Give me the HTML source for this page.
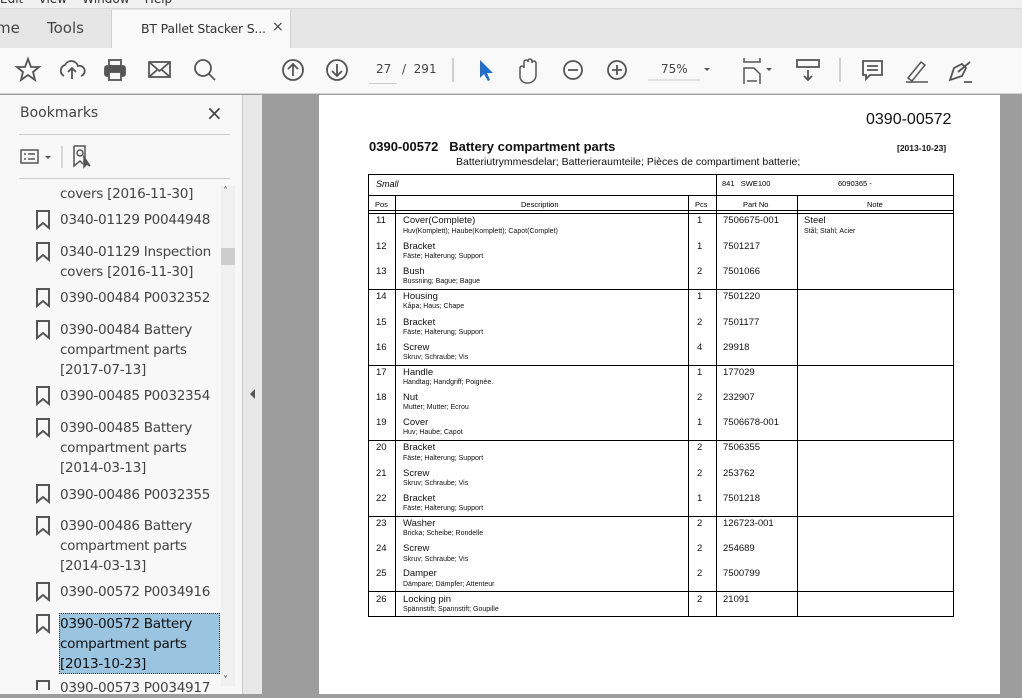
<!DOCTYPE html>
<html><head><meta charset="utf-8"><style>
*{margin:0;padding:0;box-sizing:border-box}
body{width:1022px;height:694px;overflow:hidden;position:relative;font-family:"Liberation Sans",sans-serif;background:#9d9d9d}
.a{position:absolute;white-space:nowrap}
.ui{font-family:"DejaVu Sans","Liberation Sans",sans-serif}
.hl{position:absolute;height:1px;background:#000}
.vl{position:absolute;width:1px;background:#000}
.n{position:absolute;font-size:9.5px;color:#111}
.s{position:absolute;font-size:7px;color:#111}
.bt{position:absolute;left:60px;font-size:13.6px;color:#444;line-height:20px;font-family:"DejaVu Sans",sans-serif;letter-spacing:-0.3px}
</style></head><body>
<!-- menu -->
<div class="a" style="left:0;top:0;width:1022px;height:8px;background:#f0f0f0"></div>
<div class="a ui" style="left:0;top:-8px;font-size:12px;color:#333">Edit &nbsp;&nbsp; View &nbsp;&nbsp; Window &nbsp;&nbsp; Help</div>
<!-- tabs -->
<div class="a" style="left:0;top:8px;width:1022px;height:40px;background:#e6e6e6;border-top:1px solid #d8d8d8"></div>
<div class="a ui" style="left:-4px;top:19px;font-size:15px;color:#444">me</div>
<div class="a ui" style="left:47px;top:19px;font-size:15px;color:#444">Tools</div>
<div class="a" style="left:111px;top:10px;width:180px;height:40px;background:#f9f9f9;border-left:1px solid #d0d0d0;border-right:1px solid #d0d0d0"></div>
<div class="a ui" style="left:141px;top:21px;font-size:12.5px;color:#333;letter-spacing:-0.2px">BT Pallet Stacker S...</div>
<div class="a ui" style="left:272px;top:19px;font-size:14px;color:#444">×</div>
<!-- toolbar -->
<div class="a" style="left:0;top:48px;width:1022px;height:46px;background:#f9f9f9;border-bottom:1px solid #d4d4d4"></div>
<svg class="a" style="left:0;top:48px" width="1022" height="46" fill="none" stroke="#555" stroke-width="1.8">
<polygon points="28,11 31,19 39,19 33,24 35,32 28,27 21,32 23,24 17,19 25,19"/>
<path d="M64,28 a6,6 0 0 1 1,-11 a7,7 0 0 1 13,1 a5,5 0 0 1 3,10 M72,31 v-11 M68,24 l4,-4 l4,4"/>
<rect x="105" y="18" width="20" height="10" rx="2" fill="#555"/><rect x="109" y="12" width="12" height="6"/><rect x="109" y="24" width="12" height="8" fill="#f9f9f9"/>
<rect x="149" y="14" width="21" height="15"/><path d="M149,14 l10.5,9 l10.5,-9 M149,29 l8,-7 M170,29 l-8,-7"/>
<circle cx="203" cy="20" r="8"/><path d="M209,26 l6,6"/>
<circle cx="293" cy="22" r="10"/><path d="M293,28 v-12 M288,21 l5,-5 l5,5"/>
<circle cx="337" cy="22" r="10"/><path d="M337,16 v12 M332,23 l5,5 l5,-5"/>
<path d="M453,10 v24" stroke="#ccc"/>
<path d="M480,12 v18 l4,-4 l4,7 l2,-1 l-3,-7 h6 z" fill="#1f6fd1" stroke="none"/>
<path d="M520,30 v-10 a2,2 0 0 1 4,0 v-6 a2,2 0 0 1 4,0 v-1 a2,2 0 0 1 4,0 v2 a2,2 0 0 1 4,0 v12 a8,8 0 0 1 -8,8 h-2 a8,8 0 0 1 -6,-5" stroke-width="1.5"/>
<circle cx="573" cy="22" r="9"/><path d="M568,22 h10"/>
<circle cx="617" cy="22" r="9"/><path d="M612,22 h10 M617,17 v10"/>
<path d="M648,32 h52" stroke="#ccc" stroke-width="1"/>
<path d="M704,20 l3,3 l3,-3" fill="#555" stroke="none"/>
<path d="M744,10 v4 h16 v-4 M744,36 v-16 h10 l6,6 v10 M747,33 h10" stroke-width="1.5"/>
<path d="M766,20 l3,3 l3,-3" fill="#555" stroke="none"/>
<rect x="797" y="12" width="22" height="7"/><path d="M808,22 v10 M804,28 l4,4 l4,-4"/>
<path d="M840,10 v24" stroke="#ccc"/>
<path d="M863,13 h19 v14 h-12 l-4,4 v-4 h-3 z M867,18 h11 M867,22 h11"/>
<path d="M908,30 l13,-16 l4,3 l-13,16 z M906,34 h22" stroke-width="1.5"/>
<path d="M950,32 l4,-12 l8,-4 l4,4 l-4,8 z M958,24 l12,-10 M964,34 h8"/>
</svg>
<div class="a ui" style="left:376px;top:62px;font-size:12px;color:#444">27</div>
<div class="a" style="left:369px;top:83px;width:28px;height:1px;background:#ccc"></div>
<div class="a ui" style="left:402px;top:62px;font-size:12px;color:#444">/&nbsp; 291</div>
<div class="a ui" style="left:661px;top:62px;font-size:12px;color:#444">75%</div>
<!-- sidebar -->
<div class="a" style="left:0;top:95px;width:243px;height:599px;background:#f8f8f8;border-right:1px solid #ccc"></div>
<div class="a" style="left:243px;top:95px;width:19px;height:599px;background:#e8e8e8"></div>
<div class="a" style="left:250px;top:389px;border:5px solid transparent;border-right:5px solid #555;border-left:0"></div>
<div class="a ui" style="left:20px;top:105px;font-size:14px;color:#444">Bookmarks</div>
<div class="a ui" style="left:206px;top:101px;font-size:20px;color:#444">×</div>
<div class="a" style="left:19px;top:134px;width:211px;height:1px;background:#ccc"></div>
<svg class="a" style="left:18px;top:143px" width="80" height="30" fill="none" stroke="#555" stroke-width="1.5">
<rect x="3" y="7" width="17" height="13"/><path d="M6,11 h2 M10,11 h7 M6,16 h2 M10,16 h7"/><path d="M27,13 l3,3 l3,-3" fill="#555" stroke="none"/>
<path d="M44,3 v22" stroke="#ccc"/><path d="M56,3 h11 v12 M56,3 v20 l6,-5 l3,3"/><circle cx="62" cy="10" r="3"/><path d="M66,14 l0,10 l3,-3 l3,2 z" fill="#555"/>
</svg>
<div class="a" style="left:19px;top:178px;width:211px;height:1px;background:#ccc"></div>
<div class="a" style="left:221px;top:186px;width:14px;height:500px;background:#f0f0f0"></div>
<div class="a" style="left:221px;top:248px;width:14px;height:17px;background:#cdcdcd"></div>
<div class="a ui" style="left:223px;top:186px;font-size:10px;color:#555">˄</div>
<div class="a ui" style="left:223px;top:675px;font-size:10px;color:#555">˅</div>
<div class="a" style="left:59px;top:613px;width:161px;height:61px;background:#9ac4e0;border:1px dotted #333"></div>
<div class="bt" style="top:184px">covers [2016-11-30]</div>
<div class="bt" style="top:210px">0340-01129 P0044948</div>
<div class="bt" style="top:242px">0340-01129 Inspection<br>covers [2016-11-30]</div>
<div class="bt" style="top:288px">0390-00484 P0032352</div>
<div class="bt" style="top:320px">0390-00484 Battery<br>compartment parts<br>[2017-07-13]</div>
<div class="bt" style="top:386px">0390-00485 P0032354</div>
<div class="bt" style="top:418px">0390-00485 Battery<br>compartment parts<br>[2014-03-13]</div>
<div class="bt" style="top:485px">0390-00486 P0032355</div>
<div class="bt" style="top:516px">0390-00486 Battery<br>compartment parts<br>[2014-03-13]</div>
<div class="bt" style="top:582px">0390-00572 P0034916</div>
<div class="bt" style="top:614px;color:#111">0390-00572 Battery<br>compartment parts<br>[2013-10-23]</div>
<div class="bt" style="top:678px">0390-00573 P0034917</div>
<svg class="a" style="left:34px;top:210px" width="20" height="480" fill="none" stroke="#555" stroke-width="2">
<path d="M3,1 h12 v17 l-6,-5 l-6,5 z"/><path transform="translate(0,32)" d="M3,1 h12 v17 l-6,-5 l-6,5 z"/>
<path transform="translate(0,78)" d="M3,1 h12 v17 l-6,-5 l-6,5 z"/><path transform="translate(0,110)" d="M3,1 h12 v17 l-6,-5 l-6,5 z"/>
<path transform="translate(0,176)" d="M3,1 h12 v17 l-6,-5 l-6,5 z"/><path transform="translate(0,208)" d="M3,1 h12 v17 l-6,-5 l-6,5 z"/>
<path transform="translate(0,274)" d="M3,1 h12 v17 l-6,-5 l-6,5 z"/><path transform="translate(0,306)" d="M3,1 h12 v17 l-6,-5 l-6,5 z"/>
<path transform="translate(0,372)" d="M3,1 h12 v17 l-6,-5 l-6,5 z"/><path transform="translate(0,404)" d="M3,1 h12 v17 l-6,-5 l-6,5 z"/>
<path transform="translate(0,470)" d="M3,1 h12 v17 l-6,-5 l-6,5 z"/>
</svg>
<!-- page -->
<div class="a" style="left:319px;top:95px;width:681px;height:599px;background:#fff"></div>
<div class="a" style="left:866px;top:111px;font-size:16px;color:#111">0390-00572</div>
<div class="a" style="left:369px;top:139px;font-size:13px;font-weight:bold;color:#111">0390-00572 &nbsp;&nbsp;Battery compartment parts</div>
<div class="a" style="left:897px;top:143px;font-size:8.5px;font-weight:bold;color:#111">[2013-10-23]</div>
<div class="a" style="left:456px;top:156px;font-size:10.5px;color:#111">Batteriutrymmesdelar; Batterieraumteile; Pièces de compartiment batterie;</div>
<!-- table lines -->
<div class="hl" style="left:368px;top:174px;width:586px"></div>
<div class="hl" style="left:368px;top:195px;width:586px"></div>
<div class="hl" style="left:368px;top:210px;width:586px"></div>
<div class="hl" style="left:368px;top:213px;width:586px"></div>
<div class="hl" style="left:368px;top:289px;width:586px"></div>
<div class="hl" style="left:368px;top:365px;width:586px"></div>
<div class="hl" style="left:368px;top:440px;width:586px"></div>
<div class="hl" style="left:368px;top:516px;width:586px"></div>
<div class="hl" style="left:368px;top:591px;width:586px"></div>
<div class="hl" style="left:368px;top:616px;width:586px"></div>
<div class="vl" style="left:368px;top:174px;height:443px"></div>
<div class="vl" style="left:953px;top:174px;height:443px"></div>
<div class="vl" style="left:716px;top:174px;height:443px"></div>
<div class="vl" style="left:395px;top:195px;height:422px"></div>
<div class="vl" style="left:688px;top:195px;height:422px"></div>
<div class="vl" style="left:797px;top:195px;height:422px"></div>
<div class="a" style="left:376px;top:179px;font-size:9px;font-style:italic">Small</div>
<div class="a" style="left:722px;top:179px;font-size:7.5px">841 &nbsp;&nbsp;SWE100</div>
<div class="a" style="left:838px;top:179px;font-size:7.5px">6090365 -</div>
<div class="a" style="left:375px;top:200px;font-size:7.5px">Pos</div>
<div class="a" style="left:521px;top:200px;font-size:7.5px">Description</div>
<div class="a" style="left:695px;top:200px;font-size:7.5px">Pcs</div>
<div class="a" style="left:743px;top:200px;font-size:7.5px">Part No</div>
<div class="a" style="left:867px;top:200px;font-size:7.5px">Note</div>
<div class="n" style="left:804px;top:215px">Steel</div><div class="s" style="left:804px;top:228px">Stål; Stahl; Acier</div>

<div class="n" style="left:376px;top:215px">11</div><div class="n" style="left:403px;top:215px">Cover(Complete)</div><div class="s" style="left:403px;top:228px">Huv(Komplett); Haube(Komplett); Capot(Complet)</div><div class="n" style="left:697px;top:215px">1</div><div class="n" style="left:723px;top:215px">7506675-001</div>
<div class="n" style="left:376px;top:241px">12</div><div class="n" style="left:403px;top:241px">Bracket</div><div class="s" style="left:403px;top:253px">Fäste; Halterung; Support</div><div class="n" style="left:697px;top:241px">1</div><div class="n" style="left:723px;top:241px">7501217</div>
<div class="n" style="left:376px;top:266px">13</div><div class="n" style="left:403px;top:266px">Bush</div><div class="s" style="left:403px;top:278px">Bussning; Bague; Bague</div><div class="n" style="left:697px;top:266px">2</div><div class="n" style="left:723px;top:266px">7501066</div>
<div class="n" style="left:376px;top:291px">14</div><div class="n" style="left:403px;top:291px">Housing</div><div class="s" style="left:403px;top:303px">Kåpa; Haus; Chape</div><div class="n" style="left:697px;top:291px">1</div><div class="n" style="left:723px;top:291px">7501220</div>
<div class="n" style="left:376px;top:317px">15</div><div class="n" style="left:403px;top:317px">Bracket</div><div class="s" style="left:403px;top:329px">Fäste; Halterung; Support</div><div class="n" style="left:697px;top:317px">2</div><div class="n" style="left:723px;top:317px">7501177</div>
<div class="n" style="left:376px;top:342px">16</div><div class="n" style="left:403px;top:342px">Screw</div><div class="s" style="left:403px;top:354px">Skruv; Schraube; Vis</div><div class="n" style="left:697px;top:342px">4</div><div class="n" style="left:723px;top:342px">29918</div>
<div class="n" style="left:376px;top:367px">17</div><div class="n" style="left:403px;top:367px">Handle</div><div class="s" style="left:403px;top:379px">Handtag; Handgriff; Poignée.</div><div class="n" style="left:697px;top:367px">1</div><div class="n" style="left:723px;top:367px">177029</div>
<div class="n" style="left:376px;top:392px">18</div><div class="n" style="left:403px;top:392px">Nut</div><div class="s" style="left:403px;top:404px">Mutter; Mutter; Ecrou</div><div class="n" style="left:697px;top:392px">2</div><div class="n" style="left:723px;top:392px">232907</div>
<div class="n" style="left:376px;top:417px">19</div><div class="n" style="left:403px;top:417px">Cover</div><div class="s" style="left:403px;top:429px">Huv; Haube; Capot</div><div class="n" style="left:697px;top:417px">1</div><div class="n" style="left:723px;top:417px">7506678-001</div>
<div class="n" style="left:376px;top:442px">20</div><div class="n" style="left:403px;top:442px">Bracket</div><div class="s" style="left:403px;top:455px">Fäste; Halterung; Support</div><div class="n" style="left:697px;top:442px">2</div><div class="n" style="left:723px;top:442px">7506355</div>
<div class="n" style="left:376px;top:468px">21</div><div class="n" style="left:403px;top:468px">Screw</div><div class="s" style="left:403px;top:480px">Skruv; Schraube; Vis</div><div class="n" style="left:697px;top:468px">2</div><div class="n" style="left:723px;top:468px">253762</div>
<div class="n" style="left:376px;top:493px">22</div><div class="n" style="left:403px;top:493px">Bracket</div><div class="s" style="left:403px;top:505px">Fäste; Halterung; Support</div><div class="n" style="left:697px;top:493px">1</div><div class="n" style="left:723px;top:493px">7501218</div>
<div class="n" style="left:376px;top:518px">23</div><div class="n" style="left:403px;top:518px">Washer</div><div class="s" style="left:403px;top:530px">Bricka; Scheibe; Rondelle</div><div class="n" style="left:697px;top:518px">2</div><div class="n" style="left:723px;top:518px">126723-001</div>
<div class="n" style="left:376px;top:543px">24</div><div class="n" style="left:403px;top:543px">Screw</div><div class="s" style="left:403px;top:556px">Skruv; Schraube; Vis</div><div class="n" style="left:697px;top:543px">2</div><div class="n" style="left:723px;top:543px">254689</div>
<div class="n" style="left:376px;top:568px">25</div><div class="n" style="left:403px;top:568px">Damper</div><div class="s" style="left:403px;top:581px">Dämpare; Dämpfer; Attenteur</div><div class="n" style="left:697px;top:568px">2</div><div class="n" style="left:723px;top:568px">7500799</div>
<div class="n" style="left:376px;top:594px">26</div><div class="n" style="left:403px;top:594px">Locking pin</div><div class="s" style="left:403px;top:606px">Spännstift; Spannstift; Goupille</div><div class="n" style="left:697px;top:594px">2</div><div class="n" style="left:723px;top:594px">21091</div>
</body></html>
